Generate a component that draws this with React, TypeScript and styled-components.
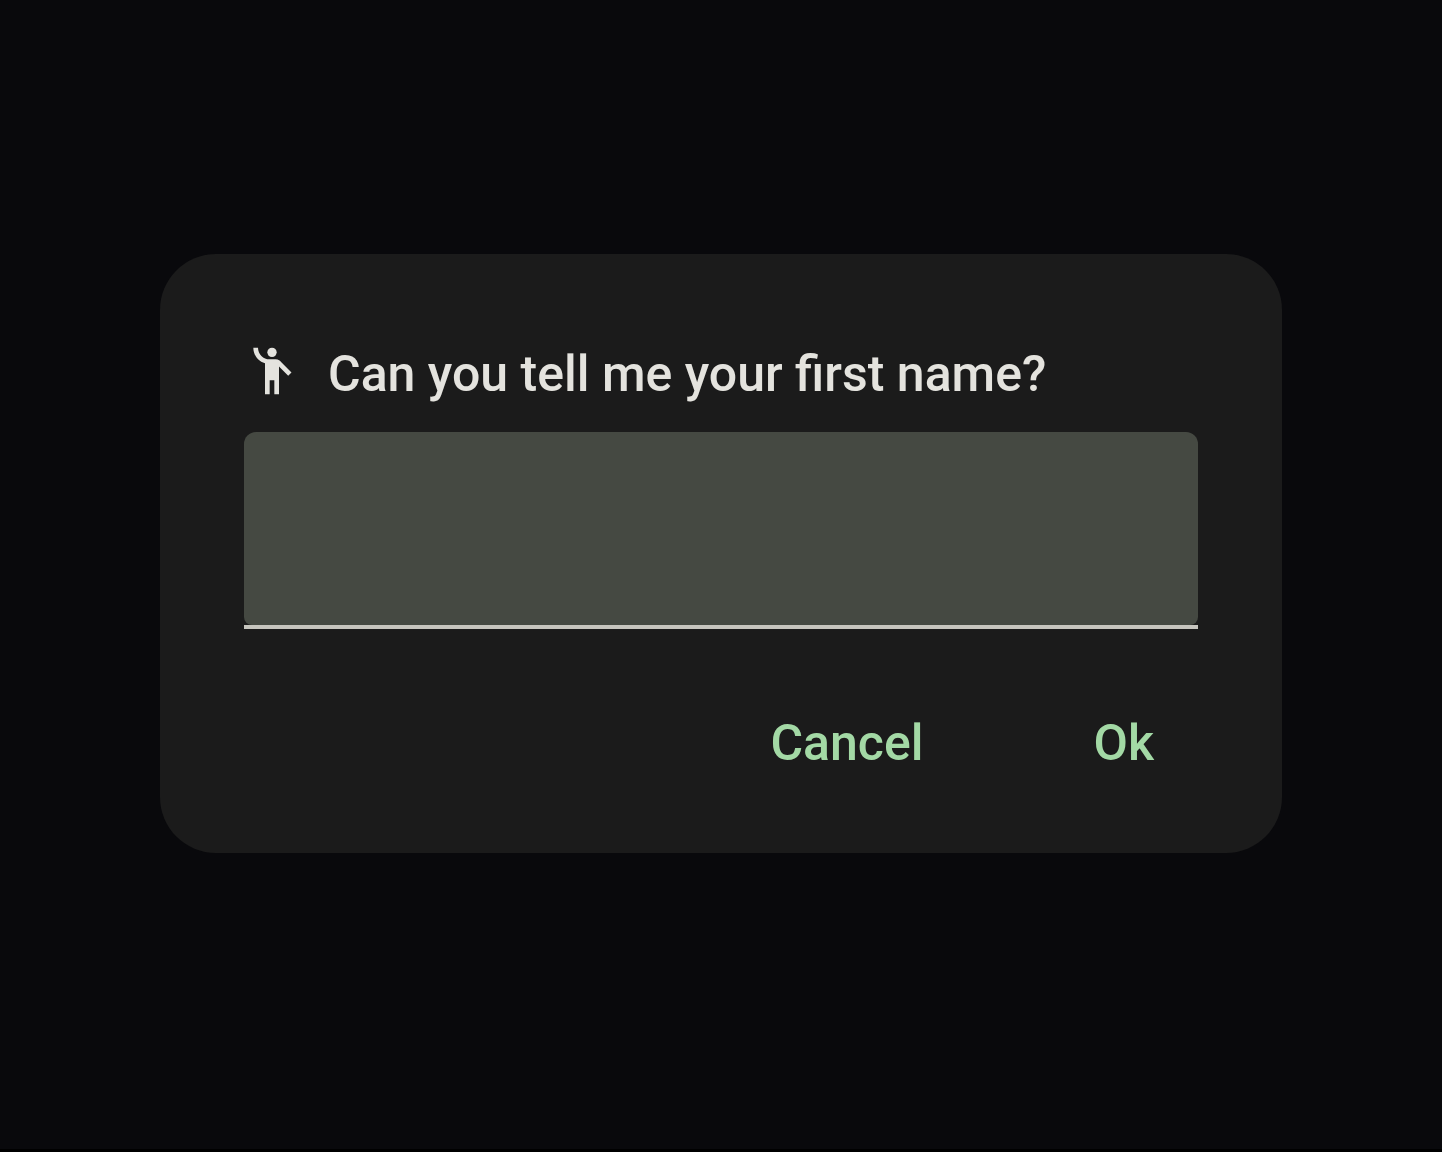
import React, { useState } from "react";
import styled, { createGlobalStyle } from "styled-components";
import { MdEmojiPeople } from "react-icons/md";

const GlobalStyle = createGlobalStyle`
  *, *::before, *::after { box-sizing: border-box; }
  body {
    margin: 0;
    background: #09090c;
    font-family: Roboto, "Noto Sans", sans-serif;
  }
`;

const Screen = styled.main`
  display: flex;
  align-items: center;
  justify-content: center;
  min-height: 100vh;
  padding: 0 160px 42px;
  border-bottom: 3px solid #000;
`;

const Dialog = styled.form`
  flex: 1;
  display: flex;
  flex-direction: column;
  padding: 84px 84px 80px;
  border-radius: 56px;
  background: #1b1b1b;
`;

const Title = styled.label`
  display: flex;
  align-items: flex-end;
  gap: 28px;
  min-height: 66px;
  margin-bottom: 28px;
  color: #e4e3de;
  font-size: 50px;
  font-weight: 500;
  line-height: 60px;

  svg {
    flex: none;
    align-self: center;
    width: 56px;
    height: 56px;
  }
`;

const Field = styled.div`
  display: flex;
  border-bottom: 4px solid #c6c5be;
`;

const TextInput = styled.input`
  flex: 1;
  min-width: 0;
  height: 193px;
  padding: 0 56px;
  border: 0;
  border-radius: 12px 12px 8px 8px;
  outline: 0;
  background: #454942;
  color: #e4e3de;
  font: 400 50px Roboto, sans-serif;
`;

const Actions = styled.div`
  display: flex;
  justify-content: flex-end;
  gap: 82px;
  margin-top: 84px;
`;

const TextButton = styled.button`
  padding: 0 44px;
  border: 0;
  background: none;
  color: #a3d9a5;
  font: 500 50px/60px Roboto, sans-serif;
  cursor: pointer;
`;

export default function App() {
  const [name, setName] = useState("");

  return (
    <>
      <GlobalStyle />
      <Screen>
        <Dialog onSubmit={(event) => event.preventDefault()}>
          <Title htmlFor="first-name">
            <MdEmojiPeople aria-hidden="true" />
            Can you tell me your first name?
          </Title>
          <Field>
            <TextInput
              id="first-name"
              type="text"
              autoComplete="given-name"
              value={name}
              onChange={(event) => setName(event.target.value)}
            />
          </Field>
          <Actions>
            <TextButton type="button" onClick={() => setName("")}>
              Cancel
            </TextButton>
            <TextButton type="submit">Ok</TextButton>
          </Actions>
        </Dialog>
      </Screen>
    </>
  );
}
